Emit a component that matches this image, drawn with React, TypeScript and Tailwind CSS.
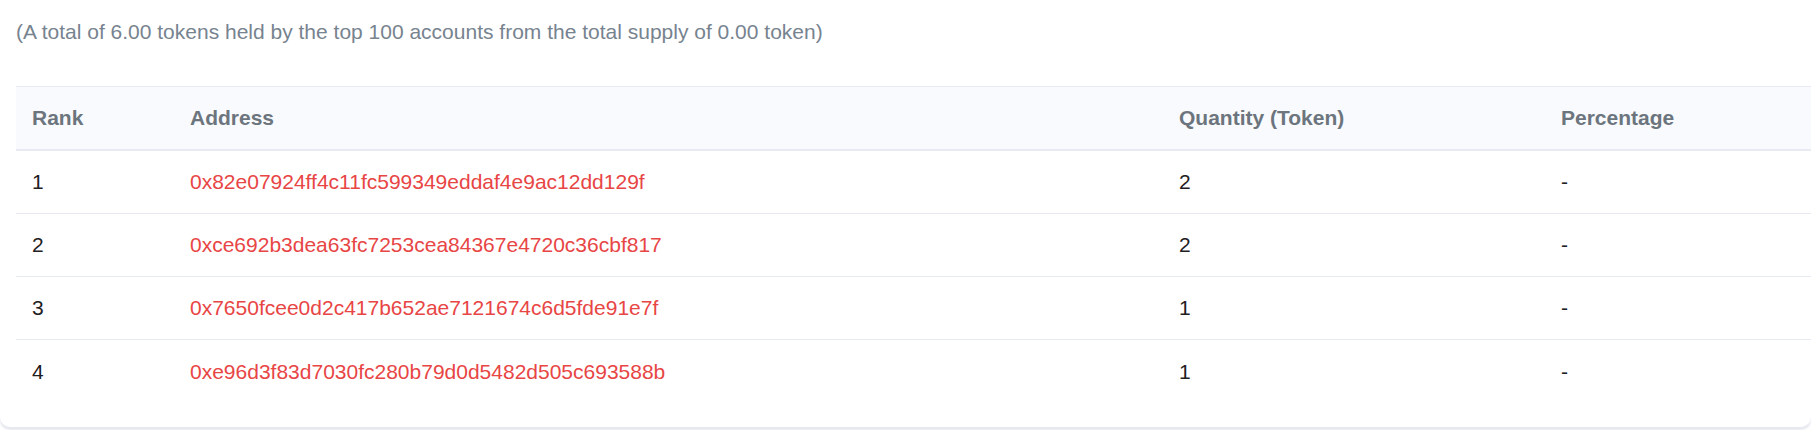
import React from "react";

const rows = [
  { rank: "1", address: "0x82e07924ff4c11fc599349eddaf4e9ac12dd129f", qty: "2", pct: "-" },
  { rank: "2", address: "0xce692b3dea63fc7253cea84367e4720c36cbf817", qty: "2", pct: "-" },
  { rank: "3", address: "0x7650fcee0d2c417b652ae7121674c6d5fde91e7f", qty: "1", pct: "-" },
  { rank: "4", address: "0xe96d3f83d7030fc280b79d0d5482d505c693588b", qty: "1", pct: "-" },
];

export default function App() {
  return (
    <div
      className="w-[1811px] h-[430px] overflow-hidden bg-white"
      style={{ fontFamily: '"Liberation Sans", Arial, sans-serif' }}
    >
      <div className="bg-white rounded-b-[10px] shadow-[0_3px_2px_rgba(180,188,205,0.35)] pb-[24px]">
        <div className="pl-[16px] pt-[18px] text-[21px] leading-[28px] text-[#77838f]">
          (A total of 6.00 tokens held by the top 100 accounts from the total supply of 0.00 token)
        </div>
        <div className="ml-[16px] mt-[40px]">
          <div className="grid grid-cols-[158px_989px_382px_1fr] h-[65px] border-t border-[#e7eaf3] border-b-[2px] border-b-[#e7eaf3] bg-[#f8fafd] items-center text-[21px] font-bold text-[#6c757d]">
            <div className="pl-[16px]">Rank</div>
            <div className="pl-[16px]">Address</div>
            <div className="pl-[16px]">Quantity (Token)</div>
            <div className="pl-[16px]">Percentage</div>
          </div>
          {rows.map((r, i) => (
            <div
              key={r.rank}
              className={
                i < rows.length - 1
                  ? "grid grid-cols-[158px_989px_382px_1fr] h-[63px] items-center text-[21px] border-b border-[#e7eaf3]"
                  : "grid grid-cols-[158px_989px_382px_1fr] h-[63px] items-center text-[21px]"
              }
            >
              <div className="pl-[16px] text-[#1e2022]">{r.rank}</div>
              <div className="pl-[16px] text-[#e84545]">{r.address}</div>
              <div className="pl-[16px] text-[#1e2022]">{r.qty}</div>
              <div className="pl-[16px] text-[#1e2022]">{r.pct}</div>
            </div>
          ))}
        </div>
      </div>
    </div>
  );
}
